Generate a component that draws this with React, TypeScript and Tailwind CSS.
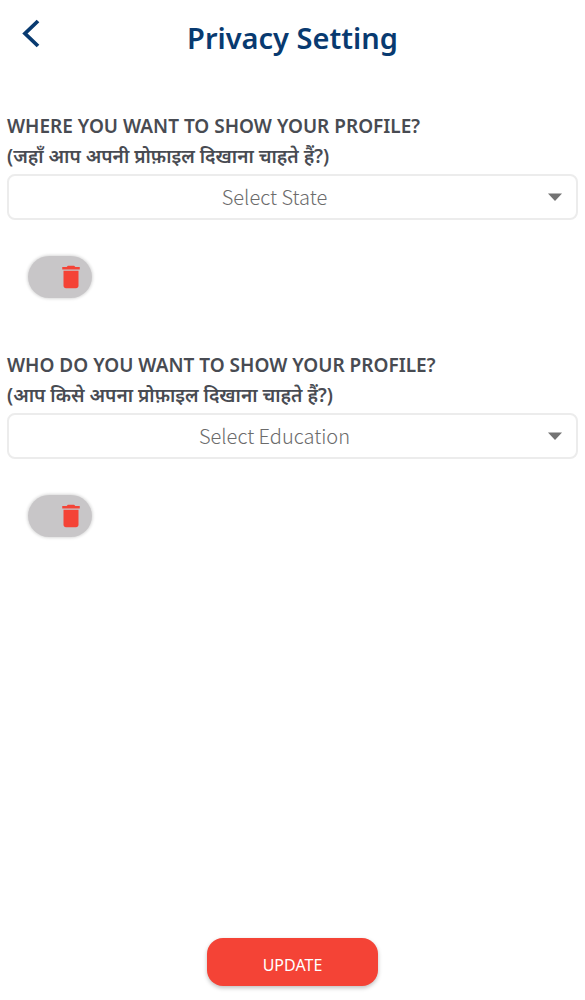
import React, { useState } from 'react';
import { MdDelete } from 'react-icons/md';

interface PrivacyFieldProps {
  id: string;
  title: string;
  hint: string;
  placeholder: string;
}

function PrivacyField({ id, title, hint, placeholder }: PrivacyFieldProps) {
  const [value, setValue] = useState('');

  return (
    <section>
      <label htmlFor={id} className="block text-[19px] leading-[30px] font-semibold text-[#484b52]">
        <span className="block">{title}</span>
        <span className="block" lang="hi">{hint}</span>
      </label>

      {/* Select */}
      <div className="relative mt-[3px]">
        <select
          id={id}
          value={value}
          onChange={(e) => setValue(e.target.value)}
          className="block w-full h-[46px] pl-3 pr-12 appearance-none rounded-lg border-2 border-[#ececec] bg-white text-xl text-center [text-align-last:center] font-['Noto_Sans_CJK_JP','Noto_Sans',sans-serif] font-light text-[#6b6b6b]"
        >
          <option value="">{placeholder}</option>
        </select>
        <svg viewBox="0 0 14 8" className="absolute right-4 top-1/2 -translate-y-1/2 w-[14px] h-2 text-[#737373] pointer-events-none" fill="currentColor">
          <path d="M0 .5h14L7 8z" />
        </svg>
      </div>

      {/* Clear selection */}
      <button
        type="button"
        aria-label="Delete"
        onClick={() => setValue('')}
        className="mt-9 ml-[21px] flex h-[42px] w-16 items-center justify-end rounded-full bg-[#c8c6c8] pr-1.5 shadow-[0_0_3px_1px_rgba(0,0,0,0.15)] cursor-pointer"
      >
        <MdDelete className="w-[30px] h-[30px] text-[#f44336]" />
      </button>
    </section>
  );
}

export default function App() {
  return (
    <div className="min-h-screen flex flex-col bg-white font-['Noto_Sans',sans-serif]">
      {/* Header */}
      <header className="relative flex h-[76px] items-center justify-center">
        <button type="button" aria-label="Back" className="absolute left-5 top-[18px] w-6 h-8 cursor-pointer">
          <svg viewBox="0 0 24 32" className="w-6 h-8 text-[#083a70]" fill="none" stroke="currentColor" strokeWidth="3.8">
            <path d="M18 3L5 15.500L18 28" strokeLinecap="butt" strokeLinejoin="miter" />
          </svg>
        </button>
        <h1 className="text-[29px] leading-9 font-semibold text-[#083a70]">Privacy Setting</h1>
      </header>

      {/* Settings */}
      <main className="flex flex-1 flex-col gap-[52px] px-[7px] pt-[35px]">
        <PrivacyField
          id="profile-state"
          title="WHERE YOU WANT TO SHOW YOUR PROFILE?"
          hint="(जहाँ आप अपनी प्रोफ़ाइल दिखाना चाहते हैं?)"
          placeholder="Select State"
        />
        <PrivacyField
          id="profile-education"
          title="WHO DO YOU WANT TO SHOW YOUR PROFILE?"
          hint="(आप किसे अपना प्रोफ़ाइल दिखाना चाहते हैं?)"
          placeholder="Select Education"
        />
      </main>

      {/* Footer */}
      <footer className="flex justify-center pb-[14px]">
        <button
          type="button"
          className="h-12 w-[171px] rounded-2xl bg-[#f44336] pt-1.5 text-base text-white shadow-[0_2px_4px_rgba(0,0,0,0.25)] cursor-pointer"
        >
          UPDATE
        </button>
      </footer>
    </div>
  );
}
